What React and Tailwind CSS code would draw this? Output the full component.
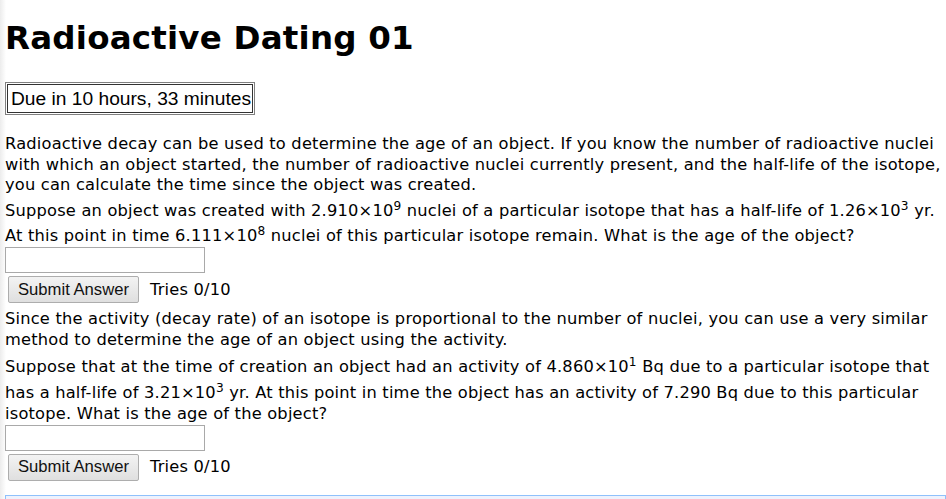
import React from 'react'

const body = { fontFamily: '"DejaVu Sans", Verdana, sans-serif' }
const arial = { fontFamily: '"Liberation Sans", Arial, sans-serif' }

function Sup({ children }) {
  return <sup className="static align-super text-[75%] leading-[20px]">{children}</sup>
}

function AnswerBlock() {
  return (
    <div>
      <input
        type="text"
        className="block h-[26px] w-[200px] border border-[#a9a9a9] bg-white px-1 outline-none"
      />
      <div className="mt-[3px] flex items-center">
        <button
          className="ml-[3px] h-[27px] w-[131px] rounded-[2px] border border-[#adadad] bg-gradient-to-b from-[#f3f3f3] to-[#dfdfdf] text-[16.67px] tracking-normal text-[#111]"
          style={arial}
        >
          Submit Answer
        </button>
        <span className="ml-[11px]">Tries 0/10</span>
      </div>
    </div>
  )
}

export default function App() {
  return (
    <div
      className="min-h-[499px] bg-[linear-gradient(to_right,#ececec,#ffffff_6px)] pl-[5px] text-black"
      style={body}
    >
      <h1 className="pt-[19px] text-[32.5px] font-bold leading-[38px] tracking-[0.2px]">
        Radioactive Dating 01
      </h1>

      <div className="mt-[25px] inline-block border border-[#808080] p-px" style={arial}>
        <div className="border border-[#333] pl-[3px] pr-[1px] text-[19.2px] leading-[27px]">
          Due in 10 hours, 33 minutes
        </div>
      </div>

      <div className="mt-[19px] whitespace-nowrap text-[16.25px] leading-[20.5px] tracking-[0.2px]">
        <p>
          Radioactive decay can be used to determine the age of an object. If you know the number of radioactive nuclei
          <br />
          with which an object started, the number of radioactive nuclei currently present, and the half-life of the isotope,
          <br />
          you can calculate the time since the object was created.
        </p>
        <p>
          Suppose an object was created with 2.910×10<Sup>9</Sup> nuclei of a particular isotope that has a half-life of
          1.26×10<Sup>3</Sup> yr.
          <br />
          At this point in time 6.111×10<Sup>8</Sup> nuclei of this particular isotope remain. What is the age of the
          object?
        </p>
        <AnswerBlock />

        <p className="mt-[6px]">
          Since the activity (decay rate) of an isotope is proportional to the number of nuclei, you can use a very similar
          <br />
          method to determine the age of an object using the activity.
        </p>
        <p className="mt-[2px]">
          Suppose that at the time of creation an object had an activity of 4.860×10<Sup>1</Sup> Bq due to a particular
          isotope that
          <br />
          has a half-life of 3.21×10<Sup>3</Sup> yr. At this point in time the object has an activity of 7.290 Bq due to
          this particular
          <br />
          isotope. What is the age of the object?
        </p>
        <AnswerBlock />
      </div>

      <div className="mt-[14px] h-[40px] border border-[#8fc1fb] bg-[#eef2fd]" />
    </div>
  )
}
